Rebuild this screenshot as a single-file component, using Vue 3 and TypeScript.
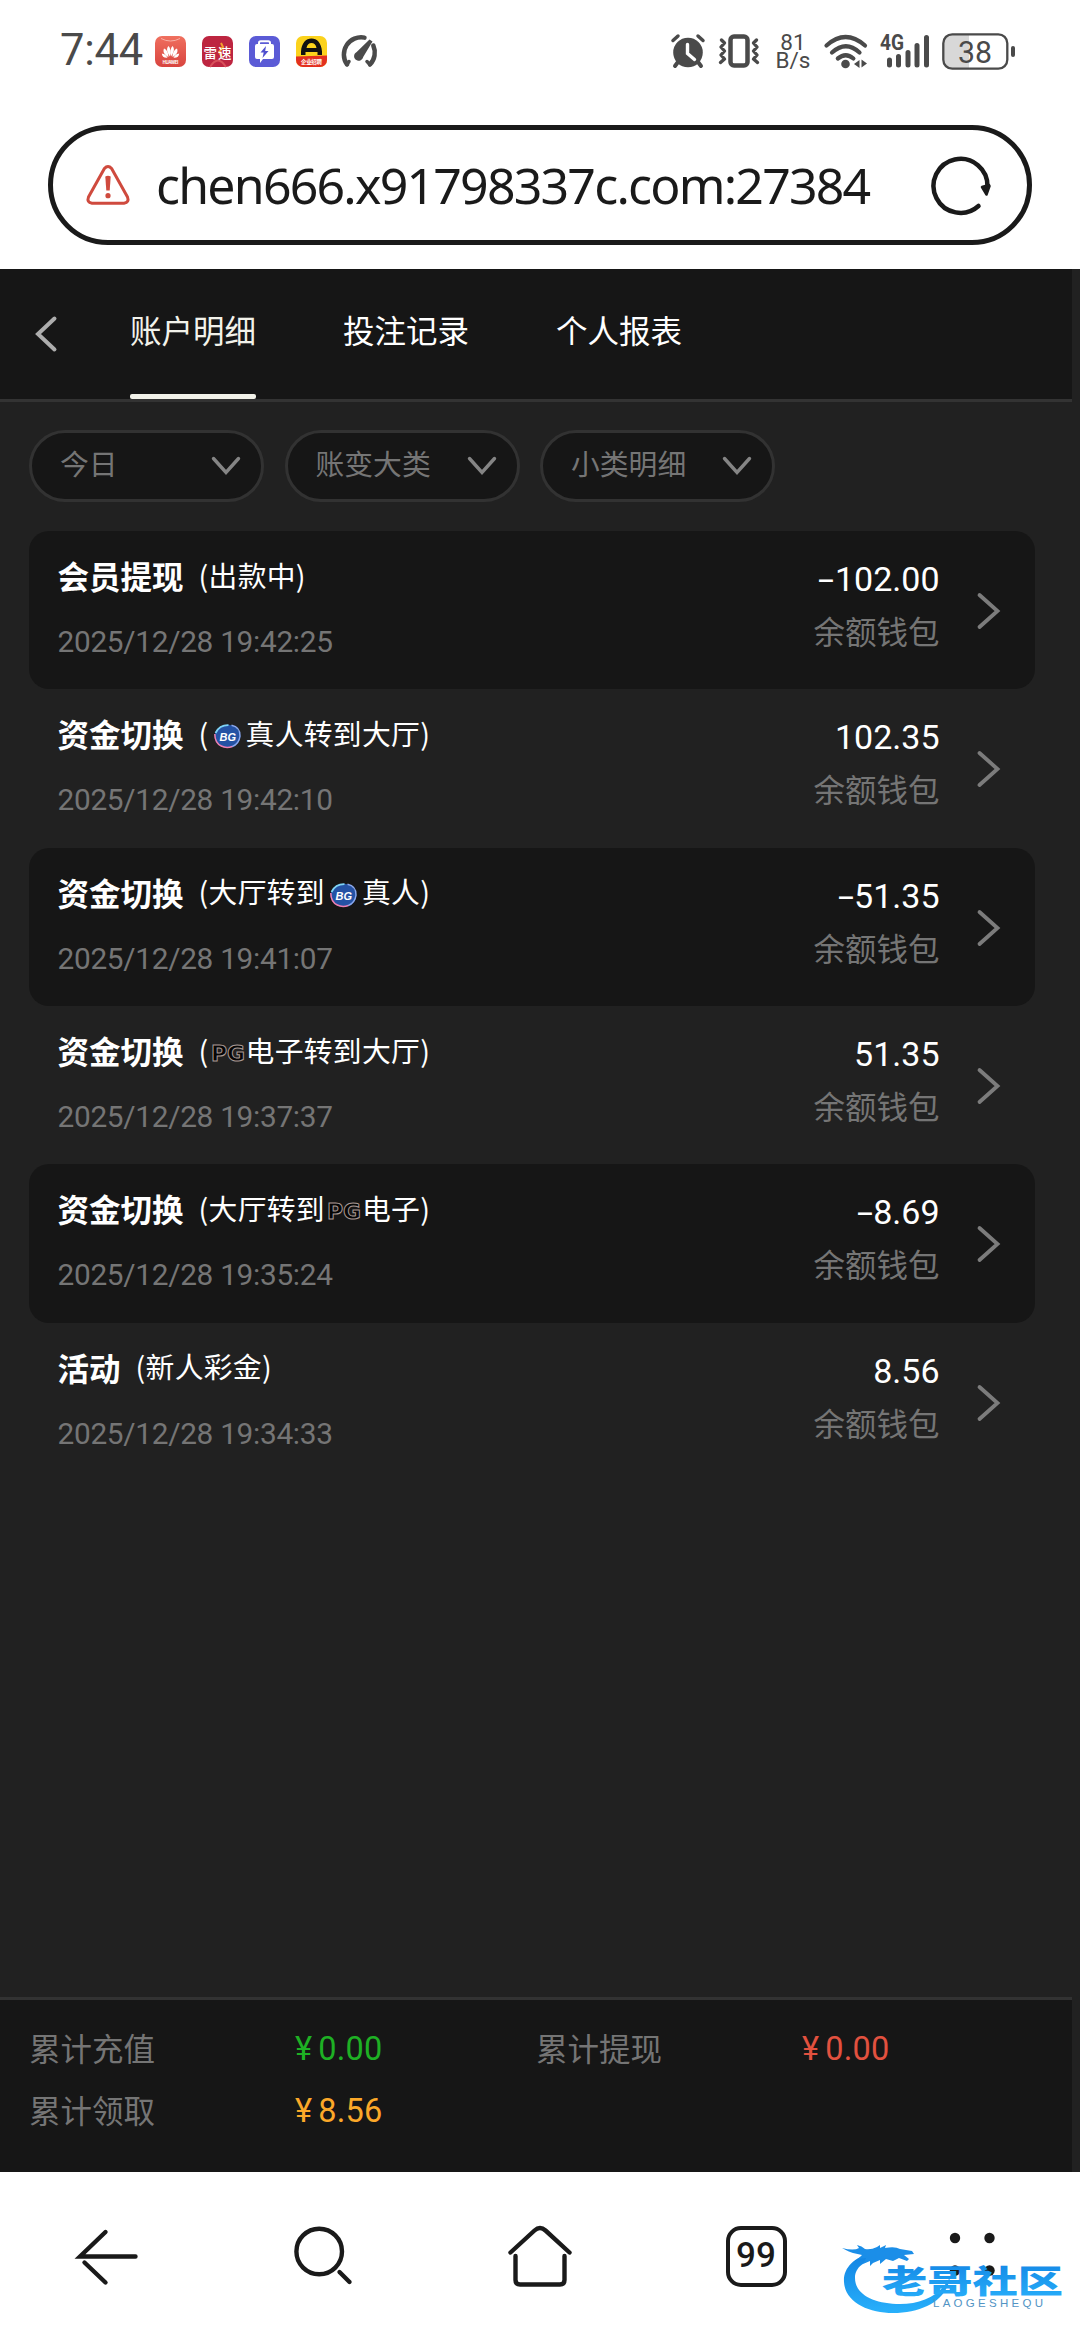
<script setup lang="ts">
import { ref } from 'vue'

type Brand = 'bg' | 'pg'
interface Part { text?: string; brand?: Brand }
interface Entry { title: string; parts: Part[]; time: string; amount: string }
interface Total { label: string; value: string; tone: string }

const tabs = ['账户明细', '投注记录', '个人报表']
const activeTab = ref(0)
const filters = ['今日', '账变大类', '小类明细']

const entries: Entry[] = [
  { title: '会员提现', parts: [{ text: '(出款中)' }], time: '2025/12/28 19:42:25', amount: '-102.00' },
  { title: '资金切换', parts: [{ text: '(' }, { brand: 'bg' }, { text: '真人转到大厅)' }], time: '2025/12/28 19:42:10', amount: '102.35' },
  { title: '资金切换', parts: [{ text: '(大厅转到' }, { brand: 'bg' }, { text: '真人)' }], time: '2025/12/28 19:41:07', amount: '-51.35' },
  { title: '资金切换', parts: [{ text: '(' }, { brand: 'pg' }, { text: '电子转到大厅)' }], time: '2025/12/28 19:37:37', amount: '51.35' },
  { title: '资金切换', parts: [{ text: '(大厅转到' }, { brand: 'pg' }, { text: '电子)' }], time: '2025/12/28 19:35:24', amount: '-8.69' },
  { title: '活动', parts: [{ text: '(新人彩金)' }], time: '2025/12/28 19:34:33', amount: '8.56' },
]

const totals: Total[] = [
  { label: '累计充值', value: '0.00', tone: 'green' },
  { label: '累计提现', value: '0.00', tone: 'red' },
  { label: '累计领取', value: '8.56', tone: 'orange' },
]
</script>

<template>
  <div class="screen">
    <header class="status">
      <span class="clock">7:44</span>
      <svg class="app" viewBox="0 0 31 31">
        <defs>
          <linearGradient id="hw" x1="0" y1="0" x2="0" y2="1">
            <stop offset="0" stop-color="#f0705f" /><stop offset="1" stop-color="#d8443f" />
          </linearGradient>
        </defs>
        <rect width="31" height="31" rx="7" fill="url(#hw)" />
        <path d="M6 2.5q9.500 5 19 0" fill="none" stroke="#f8b0a6" stroke-width="1" />
        <g fill="#fff">
          <path d="M15 20.500c-3-4-4-8-1.500-10.500 2 2 2.500 6 1.500 10.500zM16 20.500c3-4 4-8 1.500-10.500-2 2-2.500 6-1.500 10.500z" />
          <path d="M13.500 21c-4-2-6-5-4.500-8.500 3 1 4.500 5 4.500 8.500zM17.500 21c4-2 6-5 4.500-8.500-3 1-4.500 5-4.500 8.500z" />
          <path d="M12.500 21.700c-3.500.3-5.500-1.200-5.700-4.200 2.700.2 4.700 2 5.700 4.200zM18.500 21.700c3.500.3 5.500-1.200 5.700-4.200-2.700.2-4.700 2-5.700 4.200z" />
        </g>
        <text x="7.500" y="27.500" class="tiny" font-size="4.500" textLength="16">HUAWEI</text>
      </svg>
      <svg class="app" viewBox="0 0 31 31">
        <rect width="31" height="31" rx="7" fill="#bd2540" />
        <path d="M8 31q8-13 16 0" fill="none" stroke="#d8505a" stroke-width="2" />
        <path d="M19 7l2 4-4 5 3 5M18 12l4 1" fill="none" stroke="#f3a12d" stroke-width="2" />
        <text x="1.500" y="21.500" class="tiny thin" font-size="13.500" textLength="28">雷速</text>
      </svg>
      <svg class="app" viewBox="0 0 31 31">
        <rect width="31" height="31" rx="7" fill="#5b5bd6" />
        <path d="M10 8V7q0-1.700 1.700-1.700h7.600Q21 5.300 21 7v1" fill="none" stroke="#fff" stroke-width="2" />
        <path d="M8 8h15q2 0 2 2v11q0 2-2 2H14l-3 4v-4H8q-2 0-2-2V10q0-2 2-2z" fill="#fff" />
        <path d="M17 10l-5.500 6.500h3.200L13.500 22l6-7h-3.300z" fill="#5050cf" />
      </svg>
      <svg class="app" viewBox="0 0 31 31">
        <defs><clipPath id="round"><rect width="31" height="31" rx="7" /></clipPath></defs>
        <g clip-path="url(#round)">
          <rect width="31" height="31" fill="#fbd21c" />
          <path d="M5 19v-3.500C5.500 7 10 2.500 15.500 2.500S25.500 7 26 15.500V19h-4.500v-3h-12v3zM10.500 12h10q-1-5-5-5t-5 5z" fill="#111" fill-rule="evenodd" />
          <path d="M0 20.500l31-1v12H0z" fill="#e32f1f" />
          <text x="5" y="28" class="tiny" font-size="5.500" textLength="21">企业招聘</text>
        </g>
      </svg>
      <svg class="gauge" viewBox="0 0 40 36">
        <g fill="none" stroke="#4a4a4a" stroke-width="4.500" stroke-linecap="round">
          <path d="M9 31.500A17.300 17.300 0 0 1 26.500 4.600" />
          <path d="M35.300 12.500A17.300 17.300 0 0 1 32 31.500" />
          <path d="M9 31.500l2-3M32 31.500l-3-3" stroke-width="3.500" />
        </g>
        <path d="M31.500 6.500l3 2-9.300 15.500a4.600 4.600 0 1 1-6.500-5z" fill="#4a4a4a" />
      </svg>
      <div class="grow" />
      <svg class="alarm" viewBox="0 0 36 36">
        <g stroke="#4a4a4a" stroke-linecap="round" fill="none">
          <path d="M3 7.500l5-4.500M33 7.500l-5-4.500" stroke-width="3.500" />
          <path d="M8 29l-3 4M28 29l3 4" stroke-width="4" />
        </g>
        <circle cx="18" cy="19.500" r="14.800" fill="#4a4a4a" />
        <path d="M17.500 11.500v9l7 6" fill="none" stroke="#fff" stroke-width="3.400" stroke-linecap="round" />
      </svg>
      <svg class="vibrate" viewBox="0 0 42 36">
        <rect x="12.500" y="3.500" width="17" height="29" rx="3.500" fill="none" stroke="#4a4a4a" stroke-width="4.500" />
        <path d="M3.500 7l3 3-3.500 4 3.500 4-3.500 4 3.500 4-4 3.500M38.500 7l-3 3 3.500 4-3.500 4 3.500 4-3.500 4 4 3.500" fill="none" stroke="#4a4a4a" stroke-width="3.400" stroke-linecap="round" stroke-linejoin="round" />
      </svg>
      <div class="speed"><span>81</span><span>B/s</span></div>
      <svg class="wifi" viewBox="0 0 44 36">
        <g fill="none" stroke="#4a4a4a" stroke-width="4.200" stroke-linecap="round">
          <path d="M2.500 12.500q19-17 38.500 0" />
          <path d="M8 19.500q14-12.500 27.500 0" />
          <path d="M13.800 25.500q8-6.500 15.600 0" />
        </g>
        <circle cx="21.500" cy="31" r="4.300" fill="#4a4a4a" />
        <path d="M35.500 27v8l-5.500-4zM37.500 26.500l5.500 4-5.500 4z" fill="#4a4a4a" />
      </svg>
      <svg class="signal" viewBox="0 0 52 36">
        <text x="1" y="17" class="net" textLength="24" lengthAdjust="spacingAndGlyphs">4G</text>
        <g stroke="#4a4a4a" stroke-width="5" stroke-linecap="round">
          <path d="M10.500 27v5M19.500 23.500v8.500M29 19.500v12.500M38 12.500v19.500M47.500 4.500v27.500" />
        </g>
      </svg>
      <svg class="battery" viewBox="0 0 74 37">
        <path d="M9 1h18v35H9q-8 0-8-8V9q0-8 8-8z" fill="#d8d8d8" />
        <rect x="1.300" y="1.300" width="64" height="34.400" rx="9" fill="none" stroke="#4a4a4a" stroke-width="2.300" />
        <rect x="69" y="13" width="4" height="11" rx="2" fill="#4a4a4a" />
        <text x="16" y="30" class="level" textLength="34" lengthAdjust="spacingAndGlyphs">38</text>
      </svg>
    </header>

    <div class="address">
      <svg class="warn" viewBox="0 0 44 40">
        <path d="M18.400 3.500q3.600-4 7.200 0L41.500 32q2 5.500-3.500 6.300H6Q.5 37.500 2.500 32z" fill="none" stroke="#cf4a3e" stroke-width="3" stroke-linejoin="round" />
        <path d="M19.300 11.500q2.700-1.500 5.400 0l-1 14h-3.400z" fill="#cf4a3e" />
        <circle cx="22" cy="30.700" r="2.600" fill="#cf4a3e" />
      </svg>
      <span class="url">chen666.x91798337c.com:27384</span>
      <svg class="reload" viewBox="0 0 60 60">
        <path d="M47.500 51A27 27 0 1 1 56.500 32" fill="none" stroke="#1a1a1a" stroke-width="4.500" stroke-linecap="round" />
        <path d="M51 32l7-2 .5 1-3 8.500z" fill="#1a1a1a" stroke="#1a1a1a" stroke-width="2.500" stroke-linejoin="round" />
      </svg>
    </div>

    <main class="page">
      <div class="frame">
        <nav class="tabs">
          <svg class="back" viewBox="0 0 24 38">
            <path d="M20.500 3.500L4 19l16.500 15.500" fill="none" stroke="#adadad" stroke-width="4" stroke-linecap="round" />
          </svg>
          <button v-for="(tab, i) in tabs" :key="tab" class="tab" :class="{ active: i === activeTab }" @click="activeTab = i">{{ tab }}</button>
        </nav>

        <div class="filters">
          <div v-for="f in filters" :key="f" class="filter">
            <span>{{ f }}</span>
            <svg class="down" viewBox="0 0 32 22">
              <path d="M3.500 3.500L16 17.500 28.500 3.500" fill="none" stroke="#858585" stroke-width="3.400" stroke-linecap="round" />
            </svg>
          </div>
        </div>

        <ul class="list">
          <li v-for="e in entries" :key="e.time" class="row">
            <div class="info">
              <div class="head">
                <b>{{ e.title }}</b>
                <span class="detail">
                  <template v-for="(p, i) in e.parts" :key="i">
                    <span v-if="p.text">{{ p.text }}</span>
                    <svg v-else-if="p.brand === 'bg'" class="brand" viewBox="0 0 36 30">
                      <ellipse cx="18" cy="15.300" rx="12.800" ry="11.500" fill="#2452a4" />
                      <path d="M6 12Q10 4 19 4.200" fill="none" stroke="#7fd4f5" stroke-width="1.800" />
                      <path d="M22 4.200q9 2 8.500 11-1 8-8 10.500" fill="none" stroke="#8aa8ee" stroke-width="1.400" />
                      <path d="M5.300 13q0 9 6.500 12 5 2.500 11 .5" fill="none" stroke="#ee7fb0" stroke-width="1.500" />
                      <text x="10" y="19.500" class="bg" textLength="16.500" lengthAdjust="spacingAndGlyphs">BG</text>
                    </svg>
                    <svg v-else class="brand" viewBox="0 0 36 30">
                      <text x="1.500" y="23" class="pg" textLength="34" lengthAdjust="spacingAndGlyphs">PG</text>
                    </svg>
                  </template>
                </span>
              </div>
              <div class="time">{{ e.time }}</div>
            </div>
            <div class="money">
              <span class="amount"><span v-if="e.amount.startsWith('-')" class="sign">-</span>{{ e.amount.replace('-', '') }}</span>
              <span class="wallet">余额钱包</span>
            </div>
            <svg class="next" viewBox="0 0 26 40">
              <path d="M3.500 4L21.500 20 3.500 36" fill="none" stroke="#7c7c7c" stroke-width="3.800" stroke-linecap="round" />
            </svg>
          </li>
        </ul>

        <footer class="totals">
          <div v-for="t in totals" :key="t.label" class="total">
            <span class="label">{{ t.label }}</span>
            <span class="sum" :class="t.tone"><i>¥</i>{{ t.value }}</span>
          </div>
        </footer>
      </div>
    </main>

    <nav class="bottom">
      <div class="cell">
        <svg class="ico" viewBox="0 0 64 64">
          <path d="M59.500 31.500H4L29.500 7M8.500 37.500l21 20" />
        </svg>
      </div>
      <div class="cell">
        <svg class="ico" viewBox="0 0 64 64">
          <circle cx="27.200" cy="26.500" r="22.800" /><path d="M47.500 47l10 10" />
        </svg>
      </div>
      <div class="cell">
        <svg class="ico" viewBox="0 0 64 64">
          <path d="M2.500 27.500L26.500 5.500Q32 .500 37.500 5.500L61.500 27.500M7.500 31v24q0 4.500 4.500 4.500h40q4.500 0 4.500-4.500V31" />
        </svg>
      </div>
      <div class="cell"><span class="count">99</span></div>
      <div class="cell">
        <svg class="ico dots" viewBox="0 0 64 64">
          <circle cx="15" cy="13" r="5.200" /><circle cx="49.500" cy="13" r="5.200" />
          <circle cx="15" cy="45.500" r="5.200" /><circle cx="49.500" cy="45.500" r="5.200" />
        </svg>
      </div>
      <svg class="mark" viewBox="0 0 230 80">
        <defs>
          <linearGradient id="blue" x1="0" y1="0" x2="0" y2="1">
            <stop offset="0" stop-color="#1182e2" /><stop offset="1" stop-color="#28b0fb" />
          </linearGradient>
        </defs>
        <path d="M30 13C14 18 3 28 4 42c1 20 24 31 49 31 30 0 54-13 57-36-9 18-28 27-50 27-25 0-45-9-45-26 0-11 10-18 25-20z" fill="url(#blue)" />
        <path d="M2 8q12 3 17 0l-2-3q5 1 8 4 6 1 12-2l3-2v3l6-3-1 3q10-2 15 1l12 2 2 3-10 1 5 4-2 2-8-3-6 3-7-2-6 5v-4l-7 3-3 3v-5l-7 3 3-6-8 1 4-4-9-2Q9 12 2 8z" fill="#1b8ee8" />
        <text x="42" y="52.500" class="mark-cn" textLength="181" lengthAdjust="spacingAndGlyphs">老哥社区</text>
        <text x="93" y="67" class="mark-en" textLength="110">LAOGESHEQU</text>
      </svg>
    </nav>
  </div>
</template>

<style>
body {
  margin: 0;
  background: #fff;
}
</style>

<style scoped>
.screen {
  width: 1080px;
  height: 2340px;
  display: flex;
  flex-direction: column;
  overflow: hidden;
  background: #fff;
  font-family: "Noto Sans CJK SC", sans-serif;
}
svg {
  flex: none;
  display: block;
  overflow: visible;
}
.status {
  height: 102px;
  display: flex;
  align-items: center;
  padding: 0 64px 0 60px;
  box-sizing: border-box;
}
.clock {
  width: 95px;
  font: 400 43.500px/50px Roboto, sans-serif;
  letter-spacing: -0.2px;
  color: #4a4a4a;
}
.app {
  width: 31px;
  height: 31px;
  margin-right: 16px;
}
.tiny {
  fill: #fff;
  font-family: "Noto Sans CJK SC", sans-serif;
  font-weight: 700;
}
.thin {
  font-weight: 500;
}
.gauge {
  width: 40px;
  height: 36px;
  margin-left: -5px;
}
.grow {
  flex: 1;
}
.alarm {
  width: 36px;
  height: 36px;
  margin-right: 12px;
}
.vibrate {
  width: 42px;
  height: 36px;
  margin-right: 17px;
}
.speed {
  width: 32px;
  margin-right: 15px;
  display: flex;
  flex-direction: column;
  align-items: center;
  font: 400 22.500px/18.500px Roboto, sans-serif;
  color: #4a4a4a;
}
.wifi {
  width: 44px;
  height: 36px;
  margin-right: 11px;
}
.signal {
  width: 52px;
  height: 36px;
  margin-right: 11px;
}
.net {
  font: 700 22px Roboto, sans-serif;
  fill: #4a4a4a;
}
.battery {
  width: 74px;
  height: 37px;
}
.level {
  font: 400 32px Roboto, sans-serif;
  fill: #4a4a4a;
}
.address {
  margin: 23px 48px 24px;
  height: 120px;
  box-sizing: border-box;
  border: 5px solid #1a1a1a;
  border-radius: 60px;
  display: flex;
  align-items: center;
  padding: 0 36px 0 33px;
}
.warn {
  width: 44px;
  height: 40px;
}
.url {
  flex: 1;
  margin-left: 26px;
  white-space: nowrap;
  font: 400 50px/60px "Noto Sans", sans-serif;
  letter-spacing: -1.780px;
  color: #1a1a1a;
}
.reload {
  width: 60px;
  height: 60px;
}
.page {
  height: 1903px;
  background: #212121;
}
.frame {
  width: 1071.500px;
  height: 100%;
  display: flex;
  flex-direction: column;
}
.tabs {
  height: 133px;
  box-sizing: border-box;
  border-bottom: 3px solid #333;
  background: #161616;
  display: flex;
  align-items: center;
  padding-left: 34px;
}
.back {
  width: 24px;
  height: 38px;
  margin-right: 72px;
}
.tab {
  height: 130px;
  padding: 0 0 11px;
  margin-right: 87px;
  border: 0;
  background: none;
  color: #fff;
  font: 400 31.500px/46px "Noto Sans CJK SC", sans-serif;
  box-sizing: border-box;
  position: relative;
}
.tab.active {
  color: #f2f2ea;
}
.tab.active::after {
  content: "";
  position: absolute;
  left: 0;
  right: 0;
  bottom: 0;
  height: 5px;
  border-radius: 2px;
  background: #f2f2ea;
}
.filters {
  display: flex;
  gap: 20.500px;
  padding: 28px 29px 29px;
}
.filter {
  width: 235px;
  height: 72px;
  box-sizing: border-box;
  border: 3px solid #323232;
  border-radius: 36px;
  background: #161616;
  display: flex;
  align-items: center;
  justify-content: space-between;
  padding: 0 19px 0 28px;
  font-size: 28.800px;
  line-height: 42px;
  color: #757575;
}
.filter span {
  margin-top: -6px;
}
.down {
  width: 32px;
  height: 22px;
}
.list {
  margin: 0 37px 0 29px;
  padding: 0;
  list-style: none;
  flex: 1;
}
.row {
  height: 158.350px;
  box-sizing: border-box;
  border-radius: 20px;
  display: flex;
  padding: 20px 33px 0 28.500px;
}
.row:nth-child(odd) {
  background: #161616;
}
.info {
  flex: 1;
}
.head {
  display: flex;
  align-items: center;
  height: 48px;
  color: #fff;
}
.head b {
  font-size: 31.500px;
  line-height: 48px;
}
.detail {
  display: flex;
  align-items: center;
  margin-left: 15px;
  font-size: 28.800px;
  line-height: 48px;
  letter-spacing: 0.300px;
}
.detail span {
  margin-top: -1px;
}
.brand {
  width: 37px;
  height: 30px;
  margin-top: 6px;
}
.bg {
  font: italic 700 11.500px "Liberation Sans", sans-serif;
  letter-spacing: 0;
  fill: #fff;
}
.pg {
  font: 700 22px "DejaVu Sans", sans-serif;
  letter-spacing: 0;
  fill: #050505;
  stroke: #a99a95;
  stroke-width: 1;
}
.time {
  margin-top: 23px;
  font: 400 29.800px/40px Roboto, sans-serif;
  letter-spacing: -0.3px;
  color: #757575;
}
.money {
  display: flex;
  flex-direction: column;
  align-items: flex-end;
}
.amount {
  margin-top: 7px;
  font: 400 34px/42px Roboto, sans-serif;
  color: #fff;
}
.sign {
  display: inline-block;
  width: 16.500px;
  transform: scaleX(1.7);
  transform-origin: left;
}
.wallet {
  margin-top: 7px;
  font-size: 31.500px;
  line-height: 46px;
  color: #757575;
}
.next {
  width: 26px;
  height: 40px;
  margin: 40px 0 0 36px;
}
.totals {
  height: 175px;
  box-sizing: border-box;
  border-top: 3px solid #323232;
  background: #161616;
  display: flex;
  flex-wrap: wrap;
  align-content: flex-start;
  padding: 17px 0 0 29px;
}
.total {
  width: 507px;
  height: 62px;
  display: flex;
  align-items: center;
  font-size: 31.500px;
  line-height: 62px;
}
.label {
  width: 266px;
  margin-top: -2px;
  color: #757575;
}
.sum {
  margin-top: 2px;
  font: 400 32.500px/62px Roboto, sans-serif;
  letter-spacing: 0.200px;
}
.sum i {
  font-style: normal;
  margin-right: 6px;
}
.green {
  color: #1eb024;
}
.red {
  color: #e2513f;
}
.orange {
  color: #fba829;
}
.bottom {
  height: 168px;
  display: flex;
  position: relative;
}
.cell {
  flex: 1;
  display: flex;
  justify-content: center;
  padding-top: 53px;
}
.ico {
  width: 64px;
  height: 64px;
  fill: none;
  stroke: #1a1a1a;
  stroke-width: 4.400px;
  stroke-linecap: round;
}
.dots {
  fill: #1a1a1a;
  stroke: none;
}
.count {
  width: 61px;
  height: 61px;
  margin-top: 1px;
  box-sizing: border-box;
  border: 4.500px solid #1a1a1a;
  border-radius: 15px;
  text-align: center;
  font: 500 35px/51px Roboto, sans-serif;
  color: #1a1a1a;
}
.mark {
  position: absolute;
  left: 840px;
  top: 68px;
  width: 230px;
  height: 80px;
}
.mark-cn {
  font: 900 32px "Noto Sans CJK SC", sans-serif;
  fill: url(#blue);
}
.mark-en {
  font: 400 11.500px "Liberation Sans", sans-serif;
  fill: #5294c4;
}
</style>
